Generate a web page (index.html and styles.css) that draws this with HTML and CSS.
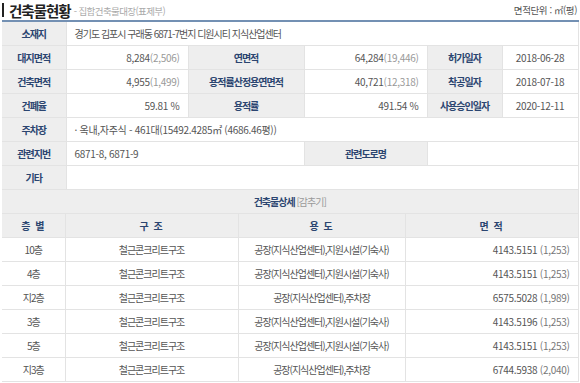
FILE: index.html
```html
<!DOCTYPE html>
<html lang="ko">
<head>
<meta charset="utf-8">
<link rel="stylesheet" href="styles.css">
</head>
<body>
<div class="wrap">
  <div class="head">
    <div class="title"><span class="bar"></span><span class="main">건축물현황</span><span class="sub">- 집합건축물대장(표제부)</span></div>
    <div class="unit">면적단위 : ㎡(평)</div>
  </div>
  <table class="info">
    <colgroup>
      <col class="c1"><col class="c2"><col class="c3"><col class="c4"><col class="c5"><col class="c6">
    </colgroup>
    <tr><th>소재지</th><td colspan="5" class="l">경기도 김포시 구래동 6871-7번지 디원시티 지식산업센터</td></tr>
    <tr><th>대지면적</th><td class="r n">8,284<span class="p">(2,506)</span></td><th>연면적</th><td class="r n">64,284<span class="p">(19,446)</span></td><th>허가일자</th><td class="c n">2018-06-28</td></tr>
    <tr><th>건축면적</th><td class="r n">4,955<span class="p">(1,499)</span></td><th>용적률산정용연면적</th><td class="r n">40,721<span class="p">(12,318)</span></td><th>착공일자</th><td class="c n">2018-07-18</td></tr>
    <tr><th>건폐율</th><td class="r n">59.81 %</td><th>용적률</th><td class="r n">491.54 %</td><th>사용승인일자</th><td class="c n">2020-12-11</td></tr>
    <tr><th>주차장</th><td colspan="5" class="l n">· 옥내,자주식 - 461대(15492.4285㎡ (4686.46평))</td></tr>
    <tr><th>관련지번</th><td colspan="2" class="l n">6871-8, 6871-9</td><th>관련도로명</th><td colspan="2"></td></tr>
    <tr><th>기타</th><td colspan="5"></td></tr>
  </table>
  <table class="detail">
    <colgroup>
      <col class="d1"><col class="d2"><col class="d3"><col class="d4">
    </colgroup>
    <tr><th colspan="4" class="cap">건축물상세 <span class="toggle">[감추기]</span></th></tr>
    <tr class="hd"><th>층 별</th><th>구 조</th><th>용 도</th><th>면 적</th></tr>
    <tr><td class="c">10층</td><td class="c">철근콘크리트구조</td><td class="c">공장(지식산업센터),지원시설(기숙사)</td><td class="r n">4143.5151 <span class="p2">(1,253)</span></td></tr>
    <tr><td class="c">4층</td><td class="c">철근콘크리트구조</td><td class="c">공장(지식산업센터),지원시설(기숙사)</td><td class="r n">4143.5151 <span class="p2">(1,253)</span></td></tr>
    <tr><td class="c">지2층</td><td class="c">철근콘크리트구조</td><td class="c">공장(지식산업센터),주차장</td><td class="r n">6575.5028 <span class="p2">(1,989)</span></td></tr>
    <tr><td class="c">3층</td><td class="c">철근콘크리트구조</td><td class="c">공장(지식산업센터),지원시설(기숙사)</td><td class="r n">4143.5196 <span class="p2">(1,253)</span></td></tr>
    <tr><td class="c">5층</td><td class="c">철근콘크리트구조</td><td class="c">공장(지식산업센터),지원시설(기숙사)</td><td class="r n">4143.5151 <span class="p2">(1,253)</span></td></tr>
    <tr><td class="c">지3층</td><td class="c">철근콘크리트구조</td><td class="c">공장(지식산업센터),주차장</td><td class="r n">6744.5938 <span class="p2">(2,040)</span></td></tr>
  </table>
</div>
</body>
</html>
```

FILE: styles.css
```css
html, body {
  margin: 0;
  padding: 0;
  background: #fff;
  overflow: hidden;
}
body {
  font-family: "Noto Sans CJK KR", "Noto Sans", sans-serif;
  font-size: 10px;
  letter-spacing: -1px;
  color: #555;
}
.wrap {
  width: 576px;
  margin-left: 2px;
}
.head {
  display: flex;
  justify-content: space-between;
  align-items: center;
  height: 20px;
}
.title {
  display: flex;
  align-items: center;
  height: 20px;
}
.bar {
  display: inline-block;
  width: 2px;
  height: 14px;
  background: #222;
  margin-right: 5px;
}
.main {
  font-size: 14.5px;
  font-weight: bold;
  color: #222;
  letter-spacing: -1px;
}
.sub {
  font-size: 9.5px;
  color: #aaa;
  margin-left: 3px;
  margin-top: 2px;
  letter-spacing: -0.6px;
}
.unit {
  font-size: 9.5px;
  color: #555;
  margin-right: 1px;
  letter-spacing: -0.4px;
}
table {
  border-collapse: collapse;
  table-layout: fixed;
  width: 576px;
}
.info {
  border-top: 2px solid #7390b3;
}
th, td {
  height: 23px;
  padding: 0 8px;
  border: 1px solid #e3e3e3;
  border-left: none;
  white-space: nowrap;
  overflow: hidden;
  line-height: 14px;
}
tr:first-child th, tr:first-child td {
  border-top: none;
}
th {
  background: #eeeeee;
  color: #2b4570;
  font-weight: bold;
  text-align: center;
}
td {
  color: #555;
}
.n { letter-spacing: -0.3px; }
.l { text-align: left; }
.r { text-align: right; }
.c { text-align: center; }
.p { color: #999; }
.p2 { color: #777; }
.c1 { width: 64px; }
.c2 { width: 122px; }
.c3 { width: 116px; }
.c4 { width: 123px; }
.c5 { width: 75px; }
.c6 { width: 76px; }
.d1 { width: 63px; }
.d2 { width: 173px; }
.d3 { width: 167px; }
.d4 { width: 173px; }
.cap {
  text-align: center;
}
.toggle {
  font-weight: normal;
  color: #999;
}
.hd th {
  letter-spacing: 1px;
}
```
